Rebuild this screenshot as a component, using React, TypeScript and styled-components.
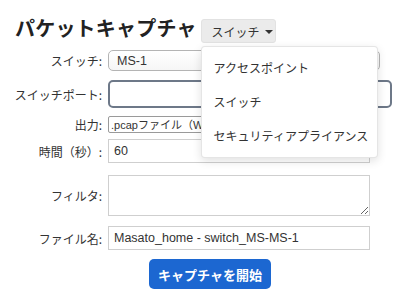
import { useState } from "react";
import styled, { createGlobalStyle } from "styled-components";

const GlobalStyle = createGlobalStyle`
  body {
    margin: 0;
    background: #fff;
    font-family: "Liberation Sans", "Noto Sans CJK JP", sans-serif;
    color: #333;
  }
`;

const menuItems = ["アクセスポイント", "スイッチ", "セキュリティアプライアンス"];

const App = () => {
  const [isMenuOpen, setIsMenuOpen] = useState(true);
  const [selected, setSelected] = useState("スイッチ");

  return (
    <>
      <GlobalStyle />
      <Page>
        <TitleRow>
          <Title>パケットキャプチャ</Title>
          <DropdownWrapper>
            <DropdownButton onClick={() => setIsMenuOpen(!isMenuOpen)}>
              {selected}
              <Caret />
            </DropdownButton>
            {isMenuOpen && (
              <Menu>
                {menuItems.map((item) => (
                  <MenuItem
                    key={item}
                    onClick={() => {
                      setSelected(item);
                      setIsMenuOpen(false);
                    }}
                  >
                    {item}
                  </MenuItem>
                ))}
              </Menu>
            )}
          </DropdownWrapper>
        </TitleRow>

        <Form>
          <Row $space={0}>
            <Label>スイッチ:</Label>
            <RoundSelect $width={272} defaultValue="MS-1">
              <option>MS-1</option>
            </RoundSelect>
          </Row>
          <Row $space={9}>
            <Label>スイッチポート:</Label>
            <PortSelect $width={284} defaultValue="">
              <option value=""></option>
            </PortSelect>
          </Row>
          <Row $space={8}>
            <Label>出力:</Label>
            <SmallSelect $width={262} defaultValue="pcap">
              <option value="pcap">.pcapファイル（Wireshark用）</option>
            </SmallSelect>
          </Row>
          <Row $space={6}>
            <Label>時間（秒）:</Label>
            <TextInput $width={262} defaultValue="60" />
          </Row>
          <Row $space={12}>
            <Label>フィルタ:</Label>
            <TextArea $width={262} />
          </Row>
          <Row $space={10}>
            <Label>ファイル名:</Label>
            <TextInput $width={262} defaultValue="Masato_home - switch_MS-MS-1" />
          </Row>
          <ButtonRow>
            <StartButton>キャプチャを開始</StartButton>
          </ButtonRow>
        </Form>
      </Page>
    </>
  );
};

const Page = styled.div`
  padding: 18px 0 0 15px;
`;

const TitleRow = styled.div`
  display: flex;
  align-items: flex-start;
  gap: 4px;
`;

const Title = styled.h1`
  margin: 0;
  font-family: "Noto Sans CJK JP", sans-serif;
  font-size: 20px;
  line-height: 20px;
  font-weight: 700;
  color: #222;
  letter-spacing: 0.2px;
`;

const DropdownWrapper = styled.div`
  position: relative;
  margin-top: 1px;
`;

const DropdownButton = styled.button`
  display: flex;
  align-items: center;
  gap: 5px;
  height: 24px;
  width: 75px;
  padding: 0 0 0 10px;
  border: 1px solid #e2e2e2;
  border-radius: 3px;
  background: #ebebeb;
  font-family: "Noto Sans CJK JP", sans-serif;
  font-size: 12px;
  color: #333;
  cursor: pointer;
`;

const Caret = styled.span`
  width: 0;
  height: 0;
  border-left: 4px solid transparent;
  border-right: 4px solid transparent;
  border-top: 4px solid #333;
  margin-top: 1px;
`;

const Menu = styled.ul`
  position: absolute;
  top: 27px;
  left: 0;
  width: 175px;
  margin: 0;
  padding: 4px 0;
  list-style: none;
  background: #fff;
  border: 1px solid rgba(0, 0, 0, 0.1);
  border-radius: 4px;
  box-shadow: 0 3px 10px rgba(0, 0, 0, 0.12);
  z-index: 10;
`;

const MenuItem = styled.li`
  height: 34px;
  line-height: 34px;
  padding: 0 12px;
  font-family: "Noto Sans CJK JP", sans-serif;
  font-size: 12px;
  color: #333;
  white-space: nowrap;
  cursor: pointer;

  &:hover {
    background: #f3f3f3;
  }
`;

const Form = styled.form`
  margin: 7px 0 0 -15px;
`;

const Row = styled.div<{ $space: number }>`
  display: flex;
  align-items: center;
  gap: 6px;
  margin-top: ${({ $space }) => $space}px;
`;

const Label = styled.label`
  width: 102px;
  flex: 0 0 102px;
  text-align: right;
  font-family: "Noto Sans CJK JP", sans-serif;
  font-size: 12px;
  color: #333;
  white-space: nowrap;
`;

const fieldBase = `
  box-sizing: border-box;
  margin: 0;
  font-family: "Liberation Sans", "Noto Sans CJK JP", sans-serif;
  color: #333;
  background: #fff;
  outline: none;
`;

const RoundSelect = styled.select<{ $width: number }>`
  ${fieldBase}
  appearance: none;
  width: ${({ $width }) => $width}px;
  height: 21px;
  padding: 0 8px;
  border: 1px solid #b4b4b4;
  border-radius: 5px;
  background: linear-gradient(#fff, #f6f6f6);
  font-size: 12.5px;
`;

const PortSelect = styled.select<{ $width: number }>`
  ${fieldBase}
  appearance: none;
  width: ${({ $width }) => $width}px;
  height: 28px;
  border: 2px solid #6d7888;
  border-radius: 5px;
`;

const SmallSelect = styled.select<{ $width: number }>`
  ${fieldBase}
  appearance: none;
  width: ${({ $width }) => $width}px;
  height: 17px;
  padding: 0 2px;
  border: 1px solid #9a9a9a;
  border-radius: 2px;
  font-size: 11px;
`;

const TextInput = styled.input<{ $width: number }>`
  ${fieldBase}
  width: ${({ $width }) => $width}px;
  height: 24px;
  padding: 0 5px;
  border: 1px solid #cfcfcf;
  border-radius: 0;
  font-size: 12.5px;
`;

const TextArea = styled.textarea<{ $width: number }>`
  ${fieldBase}
  display: block;
  width: ${({ $width }) => $width}px;
  height: 41px;
  border: 1px solid #cfcfcf;
  border-radius: 0;
  resize: both;
`;

const ButtonRow = styled.div`
  margin-top: 9px;
  padding-left: 149px;
`;

const StartButton = styled.button`
  height: 30px;
  width: 122px;
  padding: 0;
  border: none;
  border-radius: 5px;
  background: #1c67d1;
  color: #fff;
  font-family: "Noto Sans CJK JP", sans-serif;
  font-size: 13px;
  font-weight: 700;
  cursor: pointer;
`;

export default App;
